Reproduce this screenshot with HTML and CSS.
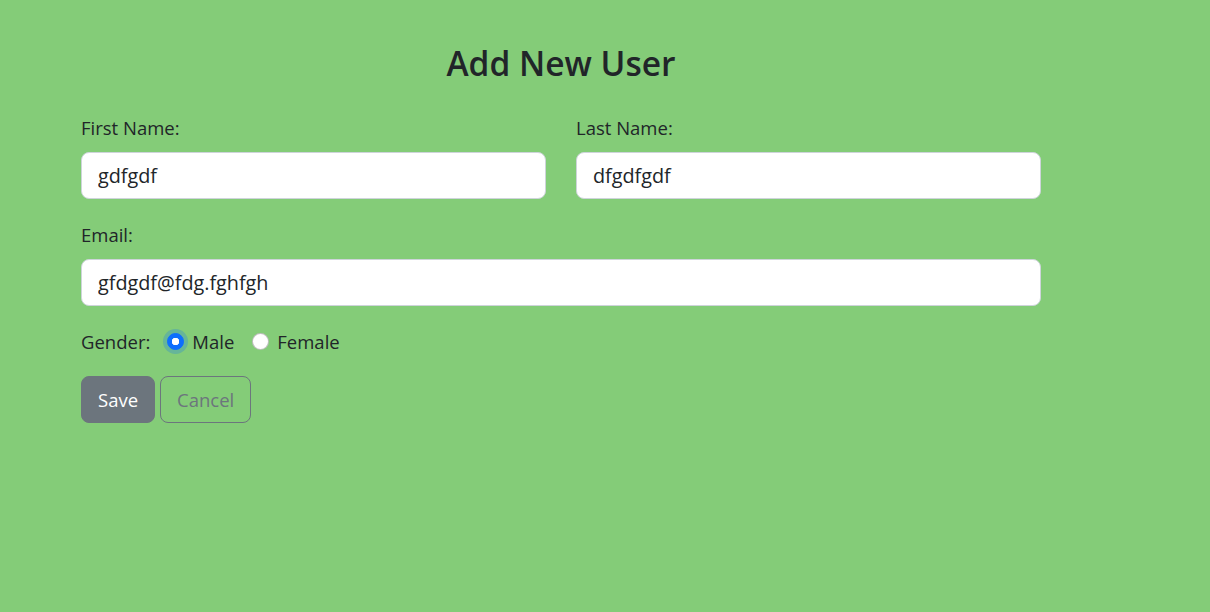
FILE: index.html
```html
<!DOCTYPE html>
<html lang="en">
<head>
    <meta charset="UTF-8">
    <meta name="viewport" content="width=device-width, initial-scale=1.0">
    <title>Add New User</title>
    <link rel="stylesheet" href="styles.css">
</head>
<body>
    <div class="user-form">
        <h2 class="form-title">Add New User</h2>
        <form>
            <div class="form-row">
                <div class="field">
                    <label for="firstName">First Name:</label>
                    <input type="text" id="firstName" class="form-control" value="gdfgdf">
                </div>
                <div class="field">
                    <label for="lastName">Last Name:</label>
                    <input type="text" id="lastName" class="form-control" value="dfgdfgdf">
                </div>
            </div>
            <div class="field field-last">
                <label for="email">Email:</label>
                <input type="email" id="email" class="form-control" value="gfdgdf@fdg.fghfgh">
            </div>
            <div class="gender-row">
                <span class="gender-label">Gender:</span>
                <label class="radio-option">
                    <input type="radio" name="gender" value="male" class="radio focused" checked>
                    <span>Male</span>
                </label>
                <label class="radio-option">
                    <input type="radio" name="gender" value="female" class="radio">
                    <span>Female</span>
                </label>
            </div>
            <div class="actions">
                <button type="submit" class="btn btn-save">Save</button>
                <button type="button" class="btn btn-cancel">Cancel</button>
            </div>
        </form>
    </div>
</body>
</html>
```

FILE: styles.css
```css
body, html {
    margin: 0;
    padding: 0;
    height: 100%;
    background-color: #84cc78;
    font-family: "Segoe UI", "Open Sans", sans-serif;
    color: #212529;
}

.user-form {
    width: 960px;
    padding: 44px 0 0 81px;
}

.form-title {
    margin: 0 0 34px;
    font-size: 33.5px;
    font-weight: 600;
    line-height: 38px;
    text-align: center;
}

.form-row {
    display: grid;
    grid-template-columns: 1fr 1fr;
    gap: 30px;
}

.field {
    margin-bottom: 24px;
}

.field-last {
    margin-bottom: 23px;
}

.field label {
    display: block;
    font-size: 18.5px;
    line-height: 24px;
    margin-bottom: 12px;
}

.form-control {
    display: block;
    box-sizing: border-box;
    width: 100%;
    height: 47px;
    padding: 8px 16px;
    font-family: inherit;
    font-size: 19.8px;
    color: #212529;
    background-color: #fff;
    border: 1px solid #ced4da;
    border-radius: 8px;
    outline: none;
}

.gender-row {
    display: flex;
    align-items: center;
    height: 24px;
    font-size: 18.5px;
    margin-bottom: 23px;
}

.gender-label {
    margin-right: 17px;
}

.radio-option {
    display: flex;
    align-items: center;
    margin-right: 18px;
}

.radio {
    appearance: none;
    width: 17px;
    height: 17px;
    margin: 0 8px 0 0;
    border: 1px solid rgba(0, 0, 0, 0.25);
    border-radius: 50%;
    background-color: #fff;
}

.radio:checked {
    background-color: #0d6efd;
    border-color: #0d6efd;
    background-image: radial-gradient(circle, #fff 0 3.5px, transparent 4px);
}

.radio.focused {
    box-shadow: 0 0 0 4px rgba(13, 110, 253, 0.25);
}

.actions {
    display: flex;
    gap: 5px;
}

.btn {
    height: 47px;
    padding: 8px 16px;
    font-family: inherit;
    font-size: 18.5px;
    border-radius: 8px;
    cursor: pointer;
}

.btn-save {
    background-color: #6c757d;
    border: 1px solid #6c757d;
    color: #fff;
}

.btn-cancel {
    background-color: transparent;
    border: 1px solid #6c757d;
    color: #6c757d;
}
```
